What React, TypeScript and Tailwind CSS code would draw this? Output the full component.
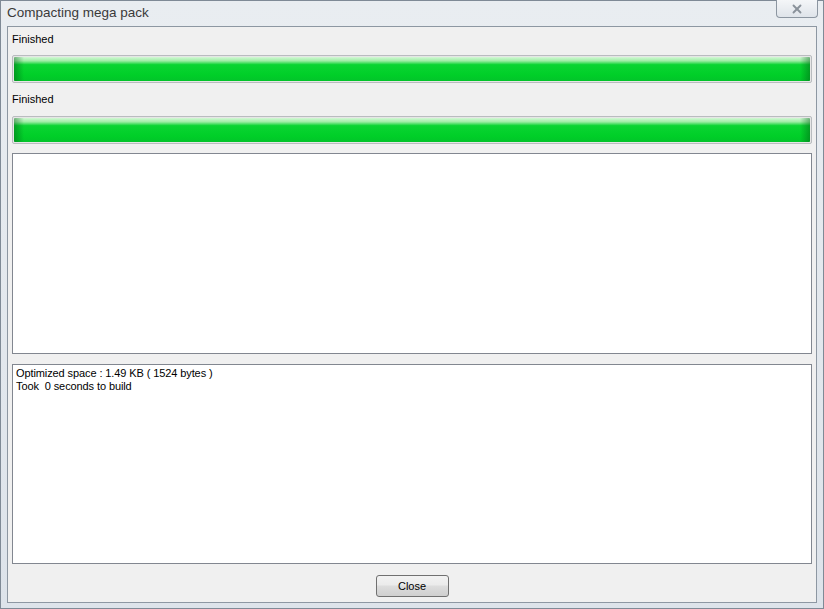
import { X } from "lucide-react";

const ui = { fontFamily: '"Liberation Sans", Arial, sans-serif' };

function ProgressBar() {
  return (
    <div className="h-[28px] rounded-[2px] border border-[#b9bcbf] bg-[#e6e6e6] p-[1px]">
      <div className="relative h-full w-full overflow-hidden rounded-[1px] bg-[linear-gradient(to_bottom,#d3f8d5_0%,#9fedA6_16%,#0ad432_32%,#00cf28_75%,#02c42a_100%)]">
        <div className="absolute inset-y-0 left-0 w-[10px] bg-[linear-gradient(to_right,rgba(0,90,20,0.45),rgba(0,90,20,0))]" />
        <div className="absolute inset-y-0 right-0 w-[10px] bg-[linear-gradient(to_left,rgba(0,90,20,0.45),rgba(0,90,20,0))]" />
      </div>
    </div>
  );
}

export default function App() {
  return (
    <div className="h-[609px] w-[824px] overflow-hidden bg-[#eef1f4]" style={ui}>
      <div className="flex h-full flex-col border border-[#7f8a96] bg-[linear-gradient(to_bottom,#e9edf1,#dde3ea)] px-[6px] pb-[5px]">
        {/* title bar */}
        <div className="relative flex h-[25px] shrink-0 items-center pl-[0px]">
          <span className="text-[13.5px] text-[#3a3a3a]" style={{ fontFamily: '"Liberation Sans", Arial, sans-serif' }}>
            Compacting mega pack
          </span>
          <div className="absolute right-[-1px] top-[-1px] flex h-[18px] w-[42px] items-center justify-center rounded-b-[4px] border border-t-0 border-[#8c96a1] bg-[linear-gradient(to_bottom,#f4f6f8,#dfe4ea)]">
            <X size={14} strokeWidth={3.2} className="text-[#8a929b]" />
          </div>
        </div>

        {/* client area */}
        <div className="flex flex-1 flex-col border border-[#8d97a2] bg-[#f0f0f0] px-[4px] pt-[6px]">
          <div className="text-[11px] leading-[13px] text-black">Finished</div>
          <div className="mt-[9px]">
            <ProgressBar />
          </div>
          <div className="mt-[10px] text-[11px] leading-[13px] text-black">Finished</div>
          <div className="mt-[10px]">
            <ProgressBar />
          </div>

          <div className="mt-[9px] h-[201px] border border-[#828790] bg-white" />

          <div className="mt-[10px] h-[200px] border border-[#828790] bg-white px-[3px] pt-[2px] text-[11px] leading-[13px] tracking-[-0.1px] text-black">
            <div>Optimized space : 1.49 KB ( 1524 bytes )</div>
            <div className="whitespace-pre">Took  0 seconds to build</div>
          </div>

          <div className="flex flex-1 items-start justify-center pt-[11px]">
            <button className="h-[22px] w-[73px] rounded-[3px] border border-[#707070] bg-[linear-gradient(to_bottom,#f2f2f2_0%,#ebebeb_45%,#dddddd_50%,#cfcfcf_100%)] pt-[1px] text-[11px] text-black">
              Close
            </button>
          </div>
        </div>
      </div>
    </div>
  );
}
